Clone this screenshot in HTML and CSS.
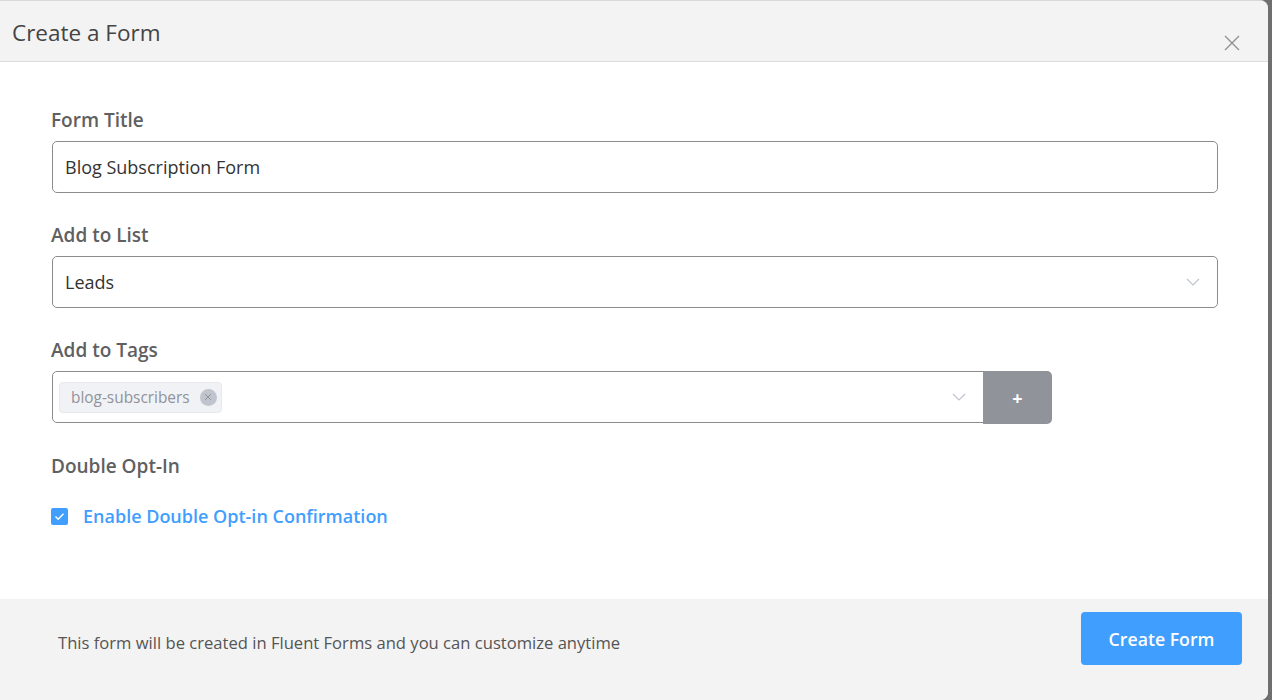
FILE: index.html
```html
<!DOCTYPE html>
<html lang="en">
<head>
    <meta charset="UTF-8">
    <meta name="viewport" content="width=device-width, initial-scale=1.0">
    <title>Create a Form</title>
    <link rel="stylesheet" href="styles.css">
</head>
<body>
    <div class="dialog">
        <div class="dialog-header">
            <span class="dialog-title">Create a Form</span>
            <button class="close-btn" aria-label="Close">
                <svg width="16" height="16" viewBox="0 0 16 16">
                    <path d="M1 1 L15 15 M15 1 L1 15" stroke="#8f8f8f" stroke-width="1.3" fill="none"/>
                </svg>
            </button>
        </div>

        <div class="dialog-body">
            <div class="field">
                <label class="field-label">Form Title</label>
                <div class="input-box">Blog Subscription Form</div>
            </div>

            <div class="field">
                <label class="field-label">Add to List</label>
                <div class="input-box select-box">
                    <span>Leads</span>
                    <svg class="caret" width="14" height="8" viewBox="0 0 14 8">
                        <path d="M1 1 L7 7 L13 1" stroke="#c0c4cc" stroke-width="1.2" fill="none"/>
                    </svg>
                </div>
            </div>

            <div class="field">
                <label class="field-label">Add to Tags</label>
                <div class="tags-row">
                    <div class="input-box select-box tags-box">
                        <span class="tag">
                            blog-subscribers
                            <span class="tag-close">
                                <svg width="8" height="8" viewBox="0 0 8 8">
                                    <path d="M1 1 L7 7 M7 1 L1 7" stroke="#909399" stroke-width="1" fill="none"/>
                                </svg>
                            </span>
                        </span>
                        <svg class="caret" width="14" height="8" viewBox="0 0 14 8">
                            <path d="M1 1 L7 7 L13 1" stroke="#c0c4cc" stroke-width="1.2" fill="none"/>
                        </svg>
                    </div>
                    <button class="add-btn">+</button>
                </div>
            </div>

            <div class="field">
                <label class="field-label">Double Opt-In</label>
                <label class="checkbox">
                    <span class="checkbox-box">
                        <svg width="11" height="9" viewBox="0 0 11 9">
                            <path d="M1.5 4.5 L4.2 7.2 L9.5 1.8" stroke="#fff" stroke-width="1.4" fill="none"/>
                        </svg>
                    </span>
                    <span class="checkbox-label">Enable Double Opt-in Confirmation</span>
                </label>
            </div>
        </div>

        <div class="dialog-footer">
            <span class="footer-note">This form will be created in Fluent Forms and you can customize anytime</span>
            <button class="primary-btn">Create Form</button>
        </div>
    </div>
</body>
</html>
```

FILE: styles.css
```css
body {
    margin: 0;
    background: #6f6f6f;
    font-family: 'Open Sans', 'Noto Sans', sans-serif;
    overflow: hidden;
}

.dialog {
    width: 1268px;
    height: 700px;
    background: #fff;
    border-top: 1px solid #d8d8d8;
    border-radius: 0 8px 8px 0;
    display: flex;
    flex-direction: column;
    box-sizing: border-box;
    overflow: hidden;
}

.dialog-header {
    height: 60px;
    background: #f3f3f3;
    border-bottom: 1px solid #dcdcdc;
    display: flex;
    justify-content: space-between;
    padding: 0 0 0 12px;
    flex-shrink: 0;
}

.dialog-title {
    font-size: 22.5px;
    color: #444;
    line-height: 1;
    margin-top: 21px;
}

.close-btn {
    border: none;
    background: none;
    padding: 0;
    margin: 34px 28px 0 0;
    width: 16px;
    height: 16px;
    cursor: pointer;
}

.dialog-body {
    flex: 1;
    padding: 46px 50px 0 51px;
}

.field {
    margin-bottom: 30px;
}

.field-label {
    display: block;
    font-size: 19px;
    font-weight: 600;
    color: #5f6061;
    line-height: 24px;
    margin-bottom: 9px;
}

.input-box {
    height: 52px;
    box-sizing: border-box;
    border: 1px solid #8c8c8c;
    border-radius: 5px;
    padding: 0 12px;
    display: flex;
    align-items: center;
    font-size: 18px;
    color: #333;
    margin-left: 1px;
}

.select-box {
    justify-content: space-between;
    padding-right: 17px;
}

.tags-row {
    display: flex;
    width: 1001px;
}

.tags-box {
    flex: 1;
    padding-left: 6px;
    border-radius: 5px 0 0 5px;
}

.tag {
    display: flex;
    align-items: center;
    gap: 10px;
    height: 31px;
    box-sizing: border-box;
    padding: 0 4px 0 11px;
    background: #f0f2f5;
    border: 1px solid #e9e9eb;
    border-radius: 4px;
    font-size: 15.4px;
    color: #909399;
}

.tag-close {
    width: 17px;
    height: 17px;
    border-radius: 50%;
    background: #c0c4cc;
    display: flex;
    align-items: center;
    justify-content: center;
}

.add-btn {
    width: 69px;
    height: 53px;
    margin-left: -1px;
    border: none;
    border-radius: 0 5px 5px 0;
    background: #909399;
    color: #fff;
    font-size: 18px;
    font-weight: 700;
    font-family: inherit;
    cursor: pointer;
}

.checkbox {
    display: flex;
    align-items: center;
    gap: 15px;
    margin-top: 26px;
    cursor: pointer;
}

.checkbox-box {
    width: 17px;
    height: 17px;
    border-radius: 2px;
    background: #409eff;
    display: flex;
    align-items: center;
    justify-content: center;
}

.checkbox-label {
    font-size: 18px;
    font-weight: 600;
    color: #409eff;
}

.dialog-footer {
    height: 101px;
    box-sizing: border-box;
    flex-shrink: 0;
    background: #f3f3f3;
    display: flex;
    justify-content: space-between;
    align-items: flex-start;
    padding: 13px 26px 0 58px;
}

.footer-note {
    font-size: 16.6px;
    color: #555;
    margin-top: 19px;
}

.primary-btn {
    width: 161px;
    height: 53px;
    border: none;
    border-radius: 4px;
    background: #409eff;
    color: #fff;
    font-size: 17.7px;
    font-weight: 600;
    font-family: inherit;
    cursor: pointer;
}
```
